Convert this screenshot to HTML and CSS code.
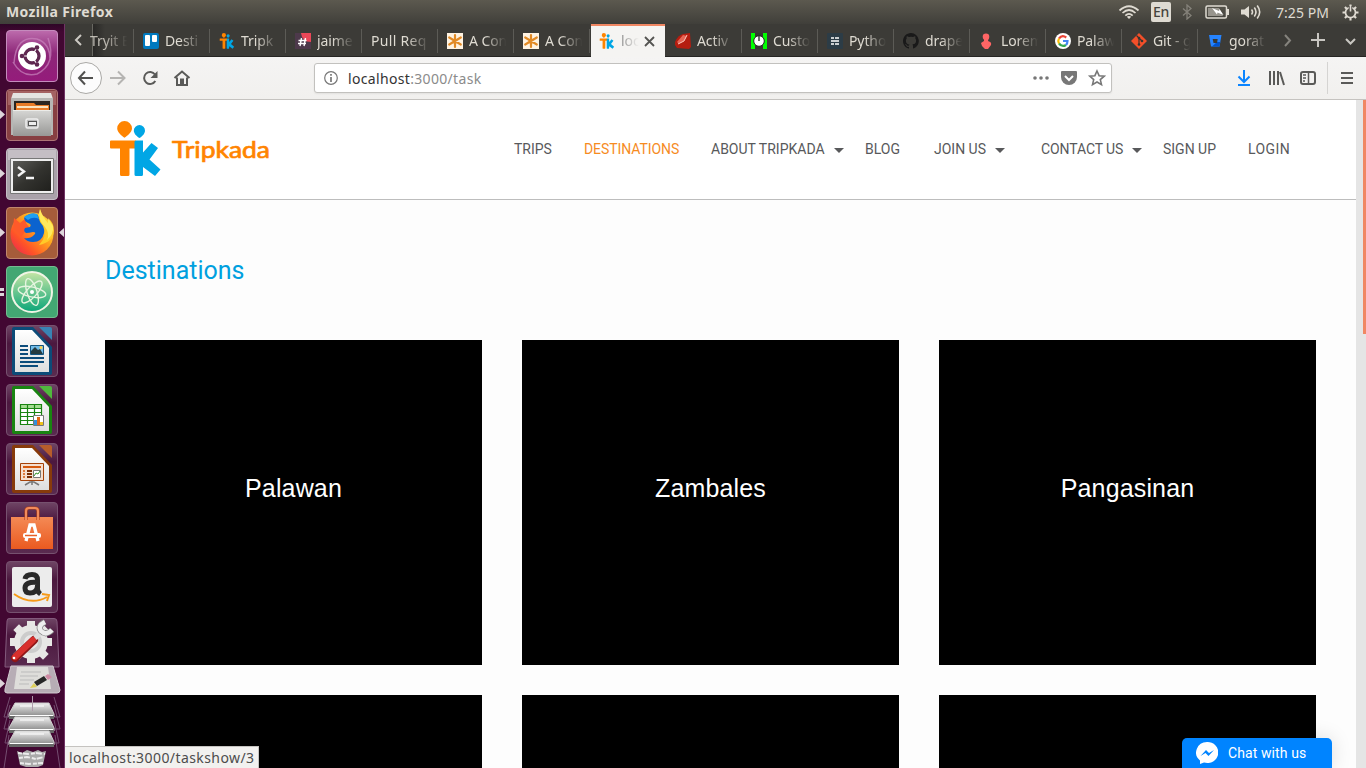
FILE: index.html
```html
<!DOCTYPE html>
<html lang="en">
<head>
<meta charset="utf-8">
<title>Tripkada</title>
<link rel="stylesheet" href="styles.css">
</head>
<body>
<svg class="defs" width="0" height="0" aria-hidden="true">
  <defs>
    <linearGradient id="purple" x2="0" y2="1"><stop stop-color="#bd6cad"/><stop offset=".45" stop-color="#8d2778"/><stop offset="1" stop-color="#951b7b"/></linearGradient>
    <linearGradient id="drawer" x2="0" y2="1"><stop stop-color="#d6d6d4"/><stop offset="1" stop-color="#989896"/></linearGradient>
    <linearGradient id="screen" x2="1" y2="1"><stop stop-color="#5c5c58"/><stop offset=".5" stop-color="#33332f"/><stop offset="1" stop-color="#20201d"/></linearGradient>
    <linearGradient id="fox" x1="1" x2="0" y2="1"><stop stop-color="#fff14c"/><stop offset=".4" stop-color="#ffa51d"/><stop offset=".7" stop-color="#ff5427"/><stop offset="1" stop-color="#e51c5a"/></linearGradient>
    <linearGradient id="atom" x2="0" y2="1"><stop stop-color="#c6e5a5"/><stop offset="1" stop-color="#0aa678"/></linearGradient>
    <linearGradient id="paper" x2="0" y2="1"><stop stop-color="#fff"/><stop offset="1" stop-color="#dedede"/></linearGradient>
    <linearGradient id="bag" x2="0" y2="1"><stop stop-color="#f48a55"/><stop offset="1" stop-color="#ea5a20"/></linearGradient>
    <linearGradient id="disk" x2="0" y2="1"><stop stop-color="#f0f0f0"/><stop offset="1" stop-color="#858585"/></linearGradient>
    <linearGradient id="plate" x2="0" y2="1"><stop stop-color="#6f4565"/><stop offset=".35" stop-color="#4c183f"/><stop offset="1" stop-color="#5a2b50"/></linearGradient>
    <symbol id="tk" viewBox="0 0 51 56">
      <path fill="#ff8400" d="M14.500 0a7.500 7.500 0 0 0-7.300 7.500c0 3.600 4.500 7.500 7.300 9.300 2.800-1.800 7.500-5.700 7.500-9.300a7.500 7.500 0 0 0-7.500-7.500zM1 19.500h25v8h-6.500v26q0 1.500-1.500 1.500h-6.500q-1.500 0-1.500-1.500v-26H1q-1 0-1-1v-6q0-1 1-1z"/>
      <path fill="#00a6e5" d="M29.500 4a5.700 5.700 0 0 0-5.700 5.700c0 2.800 3.200 5.900 5.700 7.200 2.500-1.300 5.500-4.400 5.500-7.200A5.600 5.600 0 0 0 29.500 4zM26 19.500h7v12L41.500 22l6.500 5-8.500 11.500L50.500 48.500l-5.500 6.500-12-9v7.500q0 1.500-1.500 1.500H26q-1.500 0-1.500-1.500V21q0-1.500 1.500-1.500z"/>
    </symbol>
    <symbol id="starburst" viewBox="0 0 16 16"><path fill="#fff3e2" d="M0 0h16v16H0z"/><path stroke="#e28a25" stroke-width="2.200" stroke-linecap="round" d="M8 2v12M2.200 4.500l11.600 7M2.200 11.500l11.600-7"/></symbol>
  </defs>
</svg>

<div class="desktop">
  <header class="panel">
    <strong class="app-name">Mozilla Firefox</strong>
    <div class="indicators">
      <svg width="22" height="16" viewBox="0 0 22 16" fill="none" stroke="#dfdbd2" stroke-width="1.700"><path d="M1.500 6.500Q11-2 20.500 6.500M4.500 9Q11 3 17.500 9M7.300 11.600Q11 8 14.700 11.600"/><path fill="#dfdbd2" stroke="none" d="M8.800 12.800Q11 11.200 13.200 12.800L11 15z"/></svg>
      <span class="lang">En</span>
      <svg class="bt" width="10" height="16" viewBox="0 0 10 16" fill="none" stroke="#85827a" stroke-width="1.300"><path d="M1 4.500l8 7-4 3.500V1l4 3.500-8 7"/></svg>
      <svg class="bat" width="25" height="14" viewBox="0 0 25 14"><rect x="1" y="1" width="20.500" height="12" rx="1.500" fill="none" stroke="#dfdbd2" stroke-width="1.500"/><path fill="#dfdbd2" d="M22 4h2v6h-2z"/><path fill="#98958d" d="M3 3h11l4 8H3z"/><path fill="#fff" d="M7 3l7 3 .5-2 4 6-6-2.500-.500 2z"/></svg>
      <svg class="vol" width="20" height="16" viewBox="0 0 20 16" fill="none" stroke="#dfdbd2" stroke-width="1.600"><path fill="#dfdbd2" stroke="none" d="M0 5.500h3.500L8 2v12l-4.500-3.500H0z"/><path d="M10.500 5.500q2 2.500 0 5M13.300 3.500q3.400 4.500 0 9M16.200 1.500q5 6.500 0 13"/></svg>
      <span class="clock">7:25 PM</span>
      <svg class="cog" width="17" height="17" viewBox="0 0 17 17" fill="none" stroke="#dfdbd2"><circle cx="8.500" cy="8.500" r="5" stroke-width="1.700"/><path stroke-width="2.100" d="M8.500 .5v3M8.500 13.500v3M.5 8.500h3M13.500 8.500h3M2.900 2.900L5 5M12 12l2.100 2.100M2.900 14.100L5 12M12 5l2.100-2.100"/><path stroke="#504e47" stroke-width="3.500" d="M8.500 2v4"/><path stroke-width="1.600" d="M8.500 1.500v6"/></svg>
    </div>
  </header>

  <aside class="launcher">
    <svg class="tile" viewBox="0 0 52 52"><rect x=".5" y=".5" width="51" height="51" rx="3.500" fill="url(#purple)" stroke="#c58bbd"/><g fill="none" stroke="#c984bd" stroke-width="1.500" opacity=".7"><path d="M8 33Q10 5 31 9 44 13 44 30M42 8Q51 34 31 44 16 48 7 32"/></g><circle cx="26" cy="26" r="14" fill="#fff"/><circle cx="26" cy="26" r="7" fill="none" stroke="#5e2750" stroke-width="3.300"/><path stroke="#fff" stroke-width="1.200" d="M26 26H13M26 26l6.500-11M26 26l6.500 11"/><circle cx="26" cy="26" r="5" fill="#fff"/><g fill="#5e2750"><circle cx="16" cy="26" r="2.300"/><circle cx="31" cy="17.500" r="2.300"/><circle cx="31" cy="34.500" r="2.300"/></g></svg>
    <svg class="tile" viewBox="0 0 52 52"><rect x=".5" y=".5" width="51" height="51" rx="3.500" fill="#873f42" stroke="#ae7577"/><path fill="#c28583" d="M2 2h48v14H2z" opacity=".5"/><path fill="#e4e4e2" d="M7 4h38l2 6H5z"/><path fill="#b6b6b4" d="M5 9h42v37H5z"/><path fill="#2a2420" d="M8 12h36v9H8z"/><path fill="#e87b27" d="M10 14h18l2 2h13v6H10z"/><path fill="#fbe3bf" d="M11 17h31v2H11z"/><path fill="url(#drawer)" d="M7 21h38v26H7z"/><path stroke="#ecece9" d="M7 21.500h38"/><rect x="20" y="30" width="12" height="9" rx="1.500" fill="#bbb" stroke="#eee" stroke-width="1.500"/><rect x="22.500" y="32.500" width="8" height="4" fill="#eee" stroke="#555"/></svg>
    <svg class="tile" viewBox="0 0 52 52"><rect x=".5" y=".5" width="51" height="51" rx="3.500" fill="#aaa2aa" stroke="#c5bec5"/><path fill="#d5d0d5" d="M2 2h48v10H2z" opacity=".6"/><path fill="#eee" stroke="#777" d="M4.500 10.500h43v35h-43z"/><path fill="url(#screen)" d="M7 13h38v30H7z"/><path fill="none" stroke="#f4f4f4" stroke-width="2.400" d="M12 19l6 4.500-6 4.500M20 30h8"/></svg>
    <svg class="tile" viewBox="0 0 52 52"><rect x=".5" y=".5" width="51" height="51" rx="3.500" fill="#a65c3a" stroke="#c1876c"/><circle cx="26" cy="27" r="21.500" fill="url(#fox)"/><path fill="#ff5a2a" d="M7 22l1-11 6 5 6-5v5l3 4-8 10z"/><path fill="#0b63cf" d="M18 11q5-6 13-4l3 5q6 5 4 14-2 9-11 9-6 0-9-4 6 1 10-3 3-3-1-3-4 1-7 1-3-2-1-5l5-1q2-3-2-4-3-1-4-5z"/><path fill="#1fa0f2" d="M18 10q6-5 13-3l2 5q-6-3-11 1z"/><path fill="#ffca28" d="M34 2q-4 10 3 17 5 10-4 19 14-3 15-14 0-8-5-12l-1 4Q36 9 34 2z"/><path fill="#fff16a" d="M34 2q-3 10 5 18 5 6 2 13 7-6 6-14l-5-8v5Q36 9 34 2z" opacity=".8"/></svg>
    <svg class="tile" viewBox="0 0 52 52"><rect x=".5" y=".5" width="51" height="51" rx="3.500" fill="#43a773" stroke="#74bc90"/><circle cx="26" cy="26" r="20" fill="url(#atom)" stroke="#f0f5e5" stroke-width="2"/><g fill="none" stroke="#e5f4df" stroke-width="1.400"><ellipse cx="26" cy="26" rx="14" ry="5" transform="rotate(12 26 26)"/><ellipse cx="26" cy="26" rx="14" ry="5" transform="rotate(72 26 26)"/><ellipse cx="26" cy="26" rx="14" ry="5" transform="rotate(132 26 26)"/></g><circle cx="26" cy="26" r="2" fill="#fff"/></svg>
    <svg class="tile" viewBox="0 0 52 52"><rect class="plate" x=".5" y=".5" width="51" height="51" rx="3.500"/><path fill="#0c4b78" d="M8 2h19l19 20v26q0 2-2 2H8q-2 0-2-2V4q0-2 2-2z"/><path fill="#3983b4" d="M33 2h11q2 0 2 2v11z"/><path fill="url(#paper)" d="M9 5h17l17 18v24H9z"/><path stroke="#0c4c7b" stroke-width="2" d="M14 21h8M14 25h8M14 29h8M14 33h24M14 37h24M14 41h18"/><path fill="#70bcea" stroke="#14547f" d="M24.500 20.500h13v9h-13z"/><path fill="#253b40" d="M25 29v-3l4-4 3 3 2-1 3 5z"/><circle cx="35" cy="22.500" r="1.500" fill="#ffd04a"/></svg>
    <svg class="tile" viewBox="0 0 52 52"><rect class="plate" x=".5" y=".5" width="51" height="51" rx="3.500"/><path fill="#198411" d="M8 2h19l19 20v26q0 2-2 2H8q-2 0-2-2V4q0-2 2-2z"/><path fill="#50b83d" d="M33 2h11q2 0 2 2v11z"/><path fill="url(#paper)" d="M9 5h17l17 18v24H9z"/><path fill="#a5dc92" d="M14 20h22v21H14z"/><path fill="#fff" d="M15 25h20v15H15z"/><path fill="none" stroke="#198411" stroke-width="1.200" d="M14.500 20.500h21v20h-21zM14 24.500h22M14 28.500h22M14 32.500h22M14 36.500h22M21.500 20v21M28.500 20v21"/><path fill="#fff" stroke="#777" d="M27.500 31.500h10v10h-10z"/><path fill="#3290dc" d="M28 36h3v5h-3z"/><path fill="#e36816" d="M31 33h3v8h-3z"/><path fill="#efc319" d="M34 38h3v3h-3z"/></svg>
    <svg class="tile" viewBox="0 0 52 52"><rect class="plate" x=".5" y=".5" width="51" height="51" rx="3.500"/><path fill="#873a0b" d="M8 2h19l19 20v26q0 2-2 2H8q-2 0-2-2V4q0-2 2-2z"/><path fill="#b75d2b" d="M33 2h11q2 0 2 2v11z"/><path fill="url(#paper)" d="M9 5h17l17 18v24H9z"/><path fill="#f5dfcf" stroke="#a54208" d="M14.500 20.500h23v17h-23z"/><path stroke="#d5590e" stroke-width="2" d="M17 24h18"/><path stroke="#7c2f05" stroke-width="2" d="M21 28h5M21 31h5M21 34h5"/><path stroke="#df7d3f" stroke-width="2" d="M17 28h2M17 31h2M17 34h2"/><path fill="#fff" stroke="#777" d="M27.500 27.500h7v7h-7z"/><path fill="none" stroke="#329329" d="M28 33l2-3 2 1 2-3"/><path fill="none" stroke="#777" stroke-width="1.500" d="M19 42l5-3h4l5 3M26 38v4"/></svg>
    <svg class="tile" viewBox="0 0 52 52"><rect class="plate" x=".5" y=".5" width="51" height="51" rx="3.500"/><path fill="url(#bag)" d="M5 15h42v32H5z"/><path fill="none" stroke="#b74518" stroke-width="3.200" d="M20 18V9q0-3 3-3h6q3 0 3 3v9"/><path fill="none" stroke="#f28b5b" stroke-width="2" d="M20 18V9q0-3 3-3h6q3 0 3 3v9"/><path fill="none" stroke="#fff" stroke-width="3.300" d="M20 39l4-16h4l4 16"/><rect x="17" y="31" width="18" height="5" rx="2" fill="#fff"/><path stroke="#e76027" stroke-width="1.500" d="M19 33.500h12"/></svg>
    <svg class="tile" viewBox="0 0 52 52"><rect class="plate" x=".5" y=".5" width="51" height="51" rx="3.500"/><rect x="6" y="6" width="40" height="40" rx="2" fill="#ececec"/><path fill="none" stroke="#292929" stroke-width="5" d="M19 18q1-4.500 7-4.500 5.500 0 5.500 5.500v9q0 3 3 5M31 21.500q-12-1-12 5.500 0 5 5 5 7 0 7.500-7"/><path fill="none" stroke="#f79a18" stroke-width="2" d="M8 33q17 12 33 3M36 33l7 1-2 6"/></svg>
    <svg class="stack" width="65" height="155" viewBox="0 0 65 155">
      <path fill="url(#plate)" stroke="#835b7d" d="M10 5.500h44q3 0 3 3L59 54H5L7 8q0-3 3-2.500z"/>
      <g transform="translate(31 29)"><g fill="#e7e7e5"><circle r="17"/><path d="M-4-21H4v42H-4z"/><path d="M-4-21H4v42H-4z" transform="rotate(45)"/><path d="M-4-21H4v42H-4z" transform="rotate(90)"/><path d="M-4-21H4v42H-4z" transform="rotate(135)"/></g><circle r="11" fill="#ccc"/><circle r="7" fill="#e7e7e7"/></g>
      <path stroke="#8f1718" stroke-width="8" stroke-linecap="round" d="M15 45L34 27"/><path stroke="#d8302d" stroke-width="6" stroke-linecap="round" d="M15 44L33 27"/><path stroke="#ddd" stroke-width="5" d="M35 25l8-7"/><path fill="none" stroke="#888" stroke-width="6" d="M45 9q-8 4-4 9 5 5 11-1"/><path fill="none" stroke="#eee" stroke-width="4.500" d="M45 9q-8 4-4 9 5 5 11-1"/><circle cx="14" cy="45" r="1.300" fill="#fff"/>
      <path fill="#b7adb5" stroke="#d0c8ce" d="M11 53h42l7 24q0 3-3 3H7q-3 0-2-4z"/><path fill="#deddda" d="M17 54h31l3 22H14z"/><path stroke="#bbb" d="M21 59h20M20 63h18M20 67h14M19 71h10"/><path fill="#ded05a" d="M30 75l4-5 3 4z"/><path fill="#262626" d="M34 69l10-6 3 4-10 6z"/><path fill="#cf8ba4" d="M45 63l3-2 4 3-4 3z"/>
      <g fill="none" stroke="#744e70"><path d="M10 84L4 104h56l-6-20M10 92l-6 24h56l-6-24M10 107l-5 23h54l-5-23M9 122L4 155M55 122l5 33"/></g>
      <g id="drive"><path fill="url(#disk)" stroke="#ccc" d="M15 90h34l5 11v3H9v-3z"/><path fill="#666" d="M9 103h45v3H9z"/><path stroke="#fff" d="M10 102.500h43M20 93h24"/></g>
      <use href="#drive" y="14"/><use href="#drive" y="28"/><path stroke="#ae9bab" d="M32.500 83v15"/>
      <path fill="#aaa" d="M17 138l5 2 5-3 6 2 5-2 4 2 4-1-3 14-5 2H26l-6-2z"/><path fill="none" stroke="#ececec" stroke-width="2" stroke-dasharray="4 1 6 2" d="M18 140l10 1 8-1 9 1M19 145l8-1 9 2 8-2M20 150l9 1 14-1"/>
    </svg>
    <svg class="marks" width="65" height="744" viewBox="0 0 65 744" fill="#ddd5da"><path d="M0 86l5 4.500L0 95zM0 145l5 4.500L0 154zM0 204l5 4.500L0 213zM64 204l-5 4.500 5 4.500zM0 264h4v3H0zM0 269h4v3H0zM0 655l5 4.500L0 664z"/></svg>
  </aside>

  <main class="window">
    <div class="tabs">
      <div class="scroll-left"><svg width="8" height="14" viewBox="0 0 8 14" fill="none" stroke="#ccc9c3" stroke-width="2"><path d="M7 2L2 7l5 5"/></svg></div>
      <div class="tab first"><span class="label">Tryit E</span></div>
      <div class="tab"><svg class="fav" viewBox="0 0 16 16"><rect width="16" height="16" rx="2" fill="#0079bf"/><rect x="2" y="2" width="5" height="11" rx="1" fill="#fff"/><rect x="9" y="2" width="5" height="7" rx="1" fill="#fff"/></svg><span class="label">Desti</span></div>
      <div class="tab"><svg class="fav"><use href="#tk"/></svg><span class="label">Tripk</span></div>
      <div class="tab"><svg class="fav" viewBox="0 0 16 16"><path fill="#4d394b" d="M0 0h16v16H0z"/><path fill="#ec4758" d="M6 0h10v9Q7 9 6 0z"/><path stroke="#fff" stroke-width="1.400" d="M6.500 5L5 13M10.500 5L9 13M3.500 7.500h8M3 10.500h8"/></svg><span class="label">jaime</span></div>
      <div class="tab plain"><span class="label">Pull Req</span></div>
      <div class="tab"><svg class="fav"><use href="#starburst"/></svg><span class="label">A Con</span></div>
      <div class="tab"><svg class="fav"><use href="#starburst"/></svg><span class="label">A Con</span></div>
      <div class="tab active"><svg class="fav"><use href="#tk"/></svg><span class="label">loc</span><svg class="close" width="11" height="11" viewBox="0 0 11 11" stroke="#555552" stroke-width="1.800"><path d="M1 1l9 9M10 1l-9 9"/></svg></div>
      <div class="tab"><svg class="fav" viewBox="0 0 16 16"><path fill="#b51d10" d="M0 9q3-7 8-8l7-1 1 14-2 2-12-1-2-3z"/><path fill="#e66555" d="M2 9l6-7 4 1-3 5-5 3z"/><path fill="none" stroke="#fbc5bb" d="M3 11l6-3 3-6"/></svg><span class="label">Activ</span></div>
      <div class="tab"><svg class="fav" viewBox="0 0 16 16"><path fill="#0f0" d="M0 0h16v16H0z"/><path fill="#373733" d="M4 0h8v16H4z"/><circle cx="8" cy="8" r="5.300" fill="#fff" stroke="#222"/><path stroke="#222" stroke-width="1.300" d="M8 3v5"/></svg><span class="label">Custo</span></div>
      <div class="tab"><svg class="fav" viewBox="0 0 16 16"><rect width="16" height="16" rx="1" fill="#2c3c46"/><path stroke="#fff" stroke-width="1.500" d="M4 5h3M8 5h4M4 8h8M4 11h3M8 11h4"/></svg><span class="label">Pytho</span></div>
      <div class="tab"><svg class="fav" viewBox="0 0 16 16"><path fill="#191919" d="M8 0C3.600 0 0 3.600 0 8c0 3.500 2.300 6.500 5.500 7.600.4.100.5-.2.500-.4v-1.400c-2.200.5-2.700-1-2.700-1-.4-.9-.9-1.200-.9-1.200-.7-.5.1-.5.100-.5.800.1 1.200.8 1.200.8.700 1.300 1.900.9 2.300.7.100-.5.300-.9.500-1.100-1.800-.2-3.600-.9-3.600-4 0-.9.300-1.600.8-2.100-.1-.2-.4-1 .1-2.100 0 0 .7-.2 2.200.8a7.600 7.600 0 0 1 4 0c1.500-1 2.200-.8 2.200-.8.400 1.100.2 1.900.1 2.100.5.600.8 1.300.8 2.100 0 3.100-1.900 3.700-3.700 3.900.3.300.6.800.6 1.500v2.200c0 .2.100.5.600.4A8 8 0 0 0 8 0z"/></svg><span class="label">drape</span></div>
      <div class="tab"><svg class="fav" viewBox="0 0 16 16"><circle cx="7" cy="3.800" r="3.300" fill="#ff6565"/><path fill="#ff6565" d="M5 3h5l-1 5q4 1 3 4l-3 4H6l-3-3-1-3 3-2z"/></svg><span class="label">Lorem</span></div>
      <div class="tab"><svg class="fav" viewBox="0 0 16 16"><circle cx="8" cy="8" r="8" fill="#fff"/><g fill="none" stroke-width="2.200"><path stroke="#ea4335" d="M4 5.500Q7 1.500 11.300 4.500"/><path stroke="#fbbc05" d="M4 5.500q-1.500 2.500 0 5"/><path stroke="#34a853" d="M4 10.500q3 4 7 1.500"/><path stroke="#4285f4" d="M8 8h4.500q0 2.500-1.500 4"/></g></svg><span class="label">Palaw</span></div>
      <div class="tab"><svg class="fav" viewBox="0 0 16 16"><path fill="#f34f29" d="M8 0l8 8-8 8-8-8z"/><path fill="none" stroke="#353531" stroke-width="1.200" d="M5.500 2.500L8 5v7M8 5l3 3"/><g fill="#353531"><circle cx="8" cy="5" r="1.300"/><circle cx="8" cy="11.500" r="1.300"/><circle cx="11" cy="8" r="1.300"/></g></svg><span class="label">Git - g</span></div>
      <div class="tab last"><svg class="fav" viewBox="0 0 16 16"><path fill="#2684ff" d="M2 2h12.500l-2 11.500H4z"/><path fill="#0052cc" d="M10 9h3.300l-.8 4.500H5z"/><path fill="#373733" d="M5.700 6h5l-.7 4H6.500z"/></svg><span class="label">gorat</span></div>
      <svg class="tab-tools" width="88" height="32" viewBox="0 0 88 32" fill="none" stroke="#c9c7c2" stroke-width="2"><path stroke="#85837d" d="M12 11l5 5.500-5 5.500"/><path d="M38 16h14M45 9v14M73 15l4.500 4.500L82 15"/></svg>
    </div>

    <div class="toolbar">
      <span class="back"><svg width="18" height="16" viewBox="0 0 18 16" fill="none" stroke="#51514f" stroke-width="2"><path d="M16 8H2M8 1.500L2 8l6 6.500"/></svg></span>
      <svg class="forward" width="18" height="16" viewBox="0 0 18 16" fill="none" stroke="#b5b4b2" stroke-width="2"><path d="M1 8h14M9 1.500L15.500 8 9 14.500"/></svg>
      <svg class="reload" width="16" height="16" viewBox="0 0 16 16" fill="none" stroke="#5a5a58" stroke-width="2"><path d="M13 4.500A6 6 0 1 0 13.300 11"/><path fill="#5a5a58" stroke="none" d="M15.500 1v7h-7z"/></svg>
      <svg class="home" width="18" height="16" viewBox="0 0 18 16" fill="none" stroke="#5a5a58" stroke-width="2"><path d="M1.500 8L9 1.500 16.500 8M4 7.500V15h10V7.500"/><path fill="#5a5a58" stroke="none" d="M7 8.500h4V15H7z"/></svg>
      <div class="address">
        <svg width="14" height="14" viewBox="0 0 14 14"><circle cx="7" cy="7" r="6.300" fill="none" stroke="#777" stroke-width="1.200"/><path stroke="#777" stroke-width="1.700" d="M7 3v1.700M7 6v5"/></svg>
        <span class="url">localhost<i>:3000/task</i></span>
        <svg class="page-actions" width="74" height="18" viewBox="0 0 74 18"><g fill="#777"><circle cx="3" cy="9" r="1.800"/><circle cx="9" cy="9" r="1.800"/><circle cx="15" cy="9" r="1.800"/><path d="M30 2h14q1 0 1 1v5a8 8 0 0 1-16 0V3q0-1 1-1z"/></g><path fill="none" stroke="#fff" stroke-width="2" d="M33 7l4 4 4-4"/><path fill="none" stroke="#777" stroke-width="1.600" d="M65 2l2.100 4.700 5.100.5-3.900 3.400 1.200 5L65 13l-4.500 2.600 1.200-5-3.900-3.400 5.100-.5z"/></svg>
      </div>
      <svg class="tools" width="130" height="32" viewBox="0 0 130 32" fill="none" stroke="#5a5a58" stroke-width="2"><path stroke="#0a84ff" d="M14 8v12M8.500 14.500L14 20l5.500-5.500M8 23h12"/><path d="M40 9v14M44 9v14M48 9v14M50 10l4 13"/><rect x="71" y="10" width="14" height="12" rx="2"/><path stroke-width="1.500" d="M78.500 10v12M73 13h3M73 16h3M73 19h2"/><path stroke="#d5d4d2" stroke-width="1" d="M97.500 0v32"/><path d="M111 11h12M111 16h12M111 21h12"/></svg>
    </div>

    <div class="viewport">
      <div class="site">
        <header class="site-header">
          <svg class="logo" width="162" height="58" viewBox="0 0 162 58"><svg width="51" height="56"><use href="#tk"/></svg><text class="wordmark" x="62" y="37" textLength="98" lengthAdjust="spacingAndGlyphs">Tripkada</text></svg>
          <nav class="menu"><a>TRIPS</a><a class="current">DESTINATIONS</a><a class="drop">ABOUT TRIPKADA</a><a>BLOG</a><a class="drop">JOIN US</a><a class="drop contact">CONTACT US</a><a>SIGN UP</a><a class="login">LOGIN</a></nav>
        </header>
        <h1>Destinations</h1>
        <section class="cards">
          <article>Palawan</article><article>Zambales</article><article>Pangasinan</article>
          <article></article><article></article><article></article>
        </section>
      </div>
      <div class="scrollbar"><div class="thumb"></div></div>
      <div class="status">localhost:3000/taskshow/3</div>
      <div class="chat"><svg width="22" height="22" viewBox="0 0 22 22"><path fill="#fff" d="M11 0a11 10.500 0 0 0-7 18.500V22l4-1.500A11 10.500 0 1 0 11 0z"/><path fill="#0084ff" d="M4.500 14l5.500-6 3 3 5-3-5.500 6-3-3z"/></svg><span>Chat with us</span></div>
    </div>
  </main>
</div>
</body>
</html>
```
FILE: styles.css
```css
* { box-sizing: border-box; }
body { margin: 0; width: 1366px; height: 768px; overflow: hidden; }
svg { display: block; flex: none; }
.defs { position: absolute; }
.desktop { display: grid; grid-template: 24px 744px / 65px 1301px; font-family: "Noto Sans", sans-serif; font-size: 14px; }

/* System panel */
.panel { grid-column: 1 / 3; display: flex; align-items: center; justify-content: space-between; padding: 0 7px 0 6px; background: linear-gradient(#5c594f, #403f3a); color: #dfdbd2; }
.app-name { font-size: 14px; line-height: 24px; letter-spacing: .38px; }
.indicators { display: flex; align-items: center; }
.lang { width: 20px; height: 20px; margin-left: 11px; border-radius: 2px; background: #dfdbd2; color: #45433c; font-weight: 500; line-height: 20px; text-align: center; letter-spacing: -.3px; }
.bt { margin-left: 11px; }
.bat { margin-left: 13px; }
.vol { margin-left: 11px; }
.clock { width: 53px; margin-left: 15px; white-space: nowrap; letter-spacing: .05px; }
.cog { margin-left: 13px; }

/* Launcher */
.launcher { position: relative; display: flex; flex-direction: column; gap: 7px; padding-top: 6px; background: linear-gradient(#2e0627, #420732 8px, #420732); border-right: 1px solid #713465; }
.tile { width: 52px; height: 52px; margin-left: 6px; }
.plate { fill: url(#plate); stroke: #76516f; }
.stack { margin-top: -7px; }
.marks { position: absolute; left: 0; top: 0; }

/* Tab strip */
.window { display: grid; grid-template-rows: 33px 43px 668px; }
.tabs { display: flex; background: #3c3b37; border-bottom: 1px solid #262523; color: #dfdbd2; }
.scroll-left { display: flex; align-items: center; width: 28px; padding-left: 9px; border-right: 1px solid #696862; }
.tab { position: relative; display: flex; align-items: center; flex: none; width: 76px; padding: 1px 0 0 10px; }
.tab::after { content: ""; position: absolute; right: -1px; top: 5px; height: 24px; border-right: 1px solid #5c5b56; }
.tab.first { width: 40px; padding-left: 0; background: linear-gradient(90deg, #292826, #3c3b37 12px); }
.fav { width: 16px; height: 16px; }
.label { width: 38px; margin-left: 6px; overflow: hidden; white-space: nowrap; line-height: 24px; letter-spacing: -.1px; -webkit-mask-image: linear-gradient(90deg, #000 40%, transparent 98%); mask-image: linear-gradient(90deg, #000 40%, transparent 98%); }
.first .label { margin-left: -3px; opacity: .8; }
.plain .label { width: 59px; margin-left: 0; letter-spacing: .3px; -webkit-mask-image: linear-gradient(90deg, #000 60%, transparent); mask-image: linear-gradient(90deg, #000 60%, transparent); }
.tab.active { width: 74px; height: 33px; margin: 0 0 -1px 2px; padding: 0 0 1px 8px; border-top: 2px solid #f08763; background: #f5f4f2; color: #4c4c4c; }
.active .label { width: 20px; margin-left: 6px; -webkit-mask-image: linear-gradient(90deg, #0009, transparent 90%); mask-image: linear-gradient(90deg, #0009, transparent 90%); }
.active .close { margin-left: 3px; }
.tab.active::after, .tab.last::after { display: none; }

/* Navigation toolbar */
.toolbar { display: flex; align-items: center; background: linear-gradient(#f5f4f3, #f1f0ee); border-bottom: 1px solid #c5c3c0; }
.back { display: flex; align-items: center; justify-content: center; width: 32px; height: 32px; margin-left: 5px; border: 1px solid #aaa9a6; border-radius: 50%; background: #fcfcfc; }
.forward { margin-left: 7px; }
.reload { margin-left: 15px; }
.home { margin-left: 15px; }
.address { display: flex; align-items: center; width: 798px; height: 30px; margin-left: 123px; padding: 0 5px 0 9px; border: 1px solid #c2c1be; border-radius: 3px; background: #fff; box-shadow: 0 1px 2px #0001; }
.url { margin-left: 10px; color: #333; letter-spacing: .33px; }
.url i { color: #8b8b8b; font-style: normal; }
.page-actions { margin-left: auto; }
.tools { margin-left: 118px; }

/* Web page */
.viewport { position: relative; display: grid; grid-template-columns: 1291px 10px; overflow: hidden; }
.site { height: 668px; overflow: hidden; background: #fdfdfd; font-family: Roboto, sans-serif; }
.site-header { display: flex; height: 100px; padding: 21px 0 0 45px; border-bottom: 1px solid #bdbdbd; background: #fff; }
.wordmark { fill: #ff8400; stroke: #ff8400; stroke-width: .7px; font: 400 23px Lato, sans-serif; }
.menu { display: grid; grid-template-columns: 70px 127px 154px 69px 107px 122px 85px auto; height: 20px; margin: 18px 0 0 242px; color: #58595b; font-size: 14px; line-height: 20px; white-space: nowrap; }
.menu .current { color: #f68b1f; letter-spacing: -.08px; }
.menu .contact { letter-spacing: -.1px; }
.menu .login { letter-spacing: .4px; }
.drop::after { content: ""; display: inline-block; margin-left: 9px; vertical-align: 1px; border: 5px solid transparent; border-top-color: #58595b; border-bottom: 0; }
h1 { margin: 55px 0 54px 40px; color: #00a0df; font-size: 25px; font-weight: 400; line-height: 31px; }
.cards { display: grid; grid-template-columns: repeat(3, 377px); grid-auto-rows: 325px; gap: 30px 40px; margin-left: 40px; }
.cards article { display: grid; place-items: center; padding-bottom: 28px; background: #000; color: #fff; font: 25px "Liberation Sans", Arial, sans-serif; letter-spacing: .15px; }
.scrollbar { background: #e5e5e5; }
.thumb { width: 3px; height: 234px; margin-left: 7px; background: #f08763; }
.status { position: absolute; left: 0; bottom: 0; width: 194px; height: 22px; padding-left: 4px; border: 1px solid #c5c3c0; border-width: 1px 1px 0 0; background: #f2f1ef; color: #4c4c4c; line-height: 21px; white-space: nowrap; letter-spacing: .42px; }
.chat { position: absolute; left: 1117px; bottom: 0; display: flex; gap: 10px; width: 150px; height: 30px; padding: 4px 14px; border-radius: 5px 5px 0 0; background: #0084ff; box-shadow: 0 0 20px #0002; color: #fff; font: 14px/22px Roboto, sans-serif; letter-spacing: .1px; }
```
